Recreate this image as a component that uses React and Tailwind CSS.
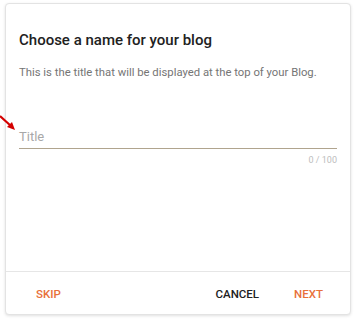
import React from "react"

function App() {
  return (
    <div className="relative w-[355px] h-[320px] bg-white font-['Roboto',sans-serif] pt-[3px] pl-[5px]">
      <div className="w-[346px] h-[312px] rounded-[4px] border border-[#e3e3e3] shadow-[0_1px_3px_rgba(0,0,0,0.12)] flex flex-col bg-white">
        <div className="flex-1 px-[13px] pt-[26px]">
          <div className="text-[15px] leading-[20px] font-medium text-[#212121]">Choose a name for your blog</div>
          <div className="mt-[15px] text-[11.3px] leading-[16px] text-[#757575]">This is the title that will be displayed at the top of your Blog.</div>
          <div className="mt-[48px] border-b border-[#b0a48e] pb-[3px]">
            <div className="text-[13px] leading-[16px] text-[#a8a8a8]">Title</div>
          </div>
          <div className="mt-[5px] text-right text-[9px] leading-[12px] text-[#bdbdbd]">0 / 100</div>
        </div>
        <div className="h-[43px] pt-[4px] border-t border-[#e6e6e6] flex items-center pl-[30px] pr-[27px] text-[11.5px] font-medium">
          <span className="text-[#e8703a]">SKIP</span>
          <span className="ml-auto text-[#212121]">CANCEL</span>
          <span className="ml-[35px] text-[#e8703a]">NEXT</span>
        </div>
      </div>
      <svg className="absolute left-0 top-[113px]" width="18" height="20" viewBox="0 0 18 20">
        <line x1="0" y1="3" x2="11" y2="13" stroke="#d40000" strokeWidth="2.2" />
        <polygon points="15,17 7,14 12,9" fill="#d40000" />
      </svg>
    </div>
  )
}

export default App
